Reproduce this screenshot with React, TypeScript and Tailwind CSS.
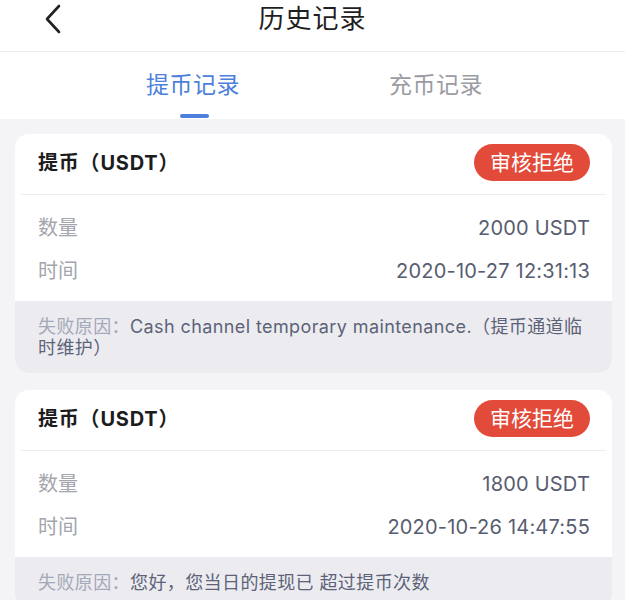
import React from "react"

interface Record {
  amount: string
  time: string
  reason: string
}

const records: Record[] = [
  {
    amount: "2000 USDT",
    time: "2020-10-27 12:31:13",
    reason: "Cash channel temporary maintenance.（提币通道临时维护）",
  },
  {
    amount: "1800 USDT",
    time: "2020-10-26 14:47:55",
    reason: "您好，您当日的提现已 超过提币次数",
  },
]

const font = { fontFamily: "Inter, 'Noto Sans CJK SC', sans-serif" }

function RecordCard({ item }: { item: Record }) {
  return (
    <div className="bg-white rounded-[14px] overflow-hidden">
      {/* header */}
      <div className="mx-[6px] h-[61px] flex items-center justify-between pl-[17px] pr-[16px] pb-[3px] border-b border-[#ededf0]">
        <span className="text-[20px] font-bold text-[#1c1c1e] tracking-[0.8px]">提币（USDT）</span>
        <span className="h-[37px] px-[16px] rounded-full bg-[#e24a3a] text-white text-[21px] flex items-center">
          审核拒绝
        </span>
      </div>

      {/* rows */}
      <div className="pl-[23px] pr-[22px] pt-[21px] pb-[18px] flex flex-col gap-[19px]">
        <div className="flex items-center justify-between h-[24px]">
          <span className="text-[20px] text-[#a3a5ad]">数量</span>
          <span className="text-[20px] text-[#575d70] tracking-[0.2px]">{item.amount}</span>
        </div>
        <div className="flex items-center justify-between h-[24px]">
          <span className="text-[20px] text-[#a3a5ad]">时间</span>
          <span className="text-[20px] text-[#575d70] tracking-[0.2px]">{item.time}</span>
        </div>
      </div>

      {/* failure reason */}
      <div className="bg-[#ececf0] pl-[23px] pr-[20px] pt-[15px] pb-[15px] text-[18px] leading-[21px] tracking-[0.4px]">
        <span className="text-[#a4a8b8]">失败原因：</span>
        <span className="text-[#5c6379]">{item.reason}</span>
      </div>
    </div>
  )
}

export default function App() {
  return (
    <div className="w-[625px] h-[600px] overflow-hidden bg-[#f4f4f6]" style={font}>
      {/* nav bar */}
      <div className="bg-white h-[52px] border-b border-[#ececee] relative">
        <div className="h-[37px] flex items-center justify-center">
          <span className="text-[26px] text-[#1f1f1f] tracking-[1px]">历史记录</span>
        </div>
        <svg className="absolute left-[43px] top-[4px]" width="20" height="30" viewBox="0 0 20 30" fill="none">
          <polyline points="16,2 4,15 16,28" stroke="#222" strokeWidth="2.6" strokeLinecap="round" strokeLinejoin="round" />
        </svg>
      </div>

      {/* tabs */}
      <div className="bg-white h-[67px] flex">
        <div className="w-[386px] flex flex-col items-center relative">
          <span className="mt-[16px] text-[23px] text-[#4d7fdc] tracking-[0.5px]">提币记录</span>
          <span className="absolute left-[180px] top-[62px] w-[29px] h-[4px] rounded-full bg-[#4d7fdc]" />
        </div>
        <div className="flex-1 flex flex-col items-start">
          <span className="mt-[16px] ml-[3px] text-[23px] text-[#9b9ca3] tracking-[0.5px]">充币记录</span>
        </div>
      </div>

      {/* list */}
      <div className="pl-[15px] pr-[13px] pt-[15px] flex flex-col gap-[17px]">
        {records.map((r, i) => (
          <RecordCard key={i} item={r} />
        ))}
      </div>
    </div>
  )
}
